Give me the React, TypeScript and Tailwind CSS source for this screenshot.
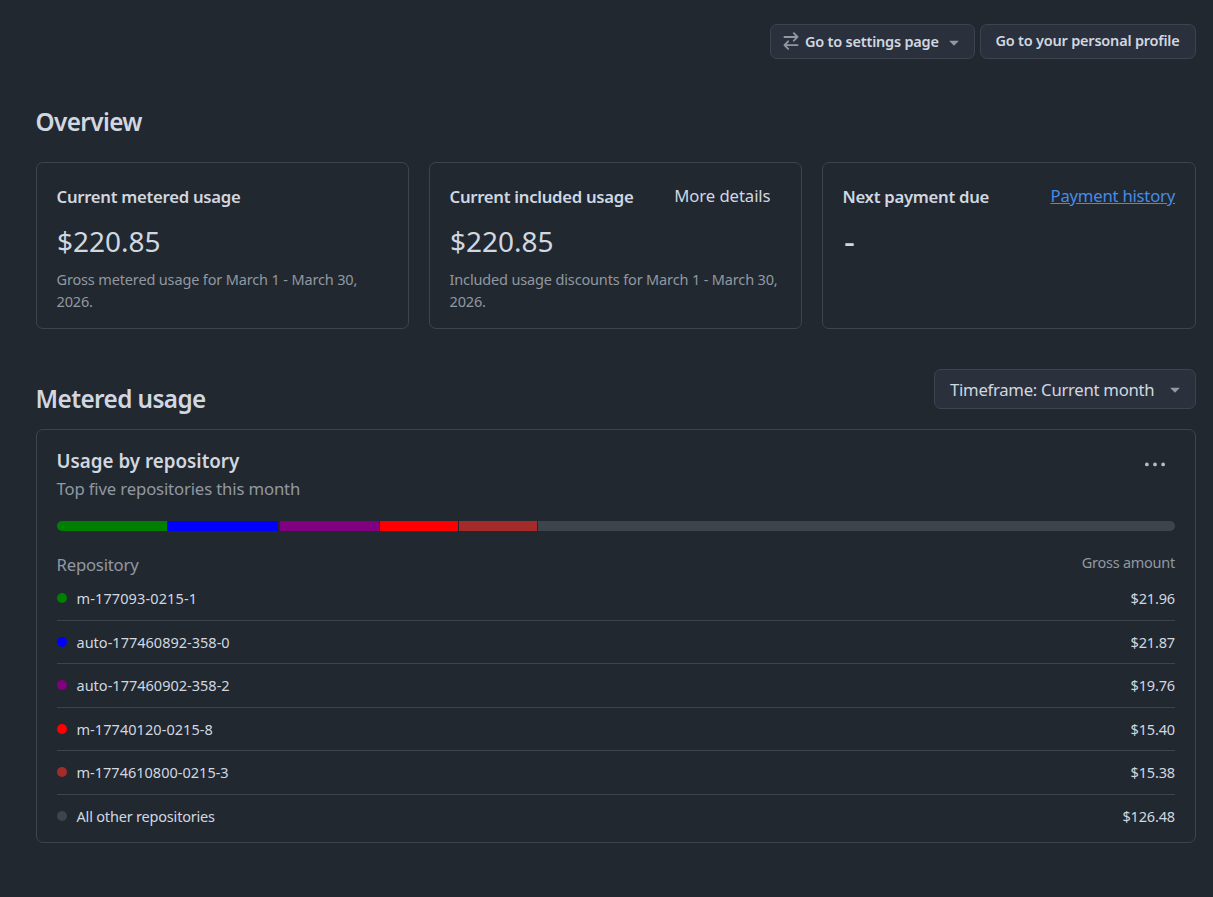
import React from 'react';

// ─────────────────────────────────────────────
// Data
// ─────────────────────────────────────────────
interface Repo {
  name: string;
  amount: string;
  dot: string;
  tracking: string;
}

const REPOS: Repo[] = [
  { name: 'm-177093-0215-1', amount: '$21.96', dot: 'bg-[#008000]', tracking: 'tracking-[0.12px]' },
  { name: 'auto-177460892-358-0', amount: '$21.87', dot: 'bg-[#0000ff]', tracking: 'tracking-[0.01px]' },
  { name: 'auto-177460902-358-2', amount: '$19.76', dot: 'bg-[#800080]', tracking: 'tracking-[0.01px]' },
  { name: 'm-17740120-0215-8', amount: '$15.40', dot: 'bg-[#ff0000]', tracking: 'tracking-[0.06px]' },
  { name: 'm-1774610800-0215-3', amount: '$15.38', dot: 'bg-[#a52a2a]', tracking: 'tracking-[0.01px]' },
  { name: 'All other repositories', amount: '$126.48', dot: 'bg-[#3d444d]', tracking: 'tracking-[-0.19px]' },
];

const SEGMENTS = [
  'w-[110px] mr-px bg-[#008000]',
  'w-[110px] mr-[2px] bg-[#0000ff]',
  'w-[99px] mr-px bg-[#800080]',
  'w-[78px] mr-px bg-[#ff0000]',
  'w-[78px] mr-px bg-[#a52a2a]',
  'flex-1 bg-[#3d444d]',
];

// ─────────────────────────────────────────────
// Icons
// ─────────────────────────────────────────────
const SwapIcon = () => (
  <svg viewBox="0 0 16 16" className="mb-[2px] h-5 w-5 shrink-0" fill="#9198a1">
    <path d="M5.22 14.78a.75.75 0 0 0 1.06-1.06L4.56 12h8.69a.75.75 0 0 0 0-1.5H4.56l1.72-1.72a.75.75 0 0 0-1.06-1.06l-3 3a.75.75 0 0 0 0 1.06l3 3Zm5.56-6.5a.75.75 0 1 1-1.06-1.06l1.72-1.72H2.75a.75.75 0 0 1 0-1.5h8.69L9.72 2.28a.75.75 0 0 1 1.06-1.06l3 3a.75.75 0 0 1 0 1.06l-3 3Z" />
  </svg>
);

const CaretIcon = () => (
  <svg viewBox="0 0 16 16" className="h-5 w-5 shrink-0" fill="#9198a1">
    <path d="m4.427 7.427 3.396 3.396a.25.25 0 0 0 .354 0l3.396-3.396A.25.25 0 0 0 11.396 7H4.604a.25.25 0 0 0-.177.427Z" />
  </svg>
);

const KebabIcon = () => (
  <svg viewBox="0 0 16 16" className="h-5 w-5" fill="#b7bdc8">
    <path d="M8 9a1.5 1.5 0 1 0 0-3 1.5 1.5 0 0 0 0 3ZM1.5 9a1.5 1.5 0 1 0 0-3 1.5 1.5 0 0 0 0 3Zm13 0a1.5 1.5 0 1 0 0-3 1.5 1.5 0 0 0 0 3Z" />
  </svg>
);

// ─────────────────────────────────────────────
// Summary card
// ─────────────────────────────────────────────
interface CardProps {
  title: string;
  value: React.ReactNode;
  note?: string;
  children?: React.ReactNode;
}

const SummaryCard = ({ title, value, note, children }: CardProps) => (
  <div className="h-[167px] rounded-[7px] border border-[#3d444d] px-5 pt-5">
    <div className="flex h-[26px] items-center justify-between whitespace-nowrap">
      <h3 className="-ml-[0.5px] pt-px text-[16.7px] font-semibold tracking-[-0.27px]">{title}</h3>
      {children}
    </div>
    <p className="mt-3 h-10 text-[28px] leading-[40px]">{value}</p>
    {note && (
      <p className="-ml-[0.5px] mt-[7px] text-[14.5px] leading-[22px] tracking-[-0.15px] text-[#9198a1]">
        {note}
      </p>
    )}
  </div>
);

export default function App() {
  return (
    <main
      className="h-[897px] w-[1213px] overflow-hidden bg-[#212830] pl-[36px] pr-[17px] pt-[24px] text-[#d1d7e0]"
      style={{ fontFamily: '"Noto Sans", "Open Sans", sans-serif' }}
    >
      {/* ── Top buttons ── */}
      <div className="flex h-[35px] justify-end gap-[5px] whitespace-nowrap text-[14.5px] font-semibold tracking-[-0.21px]">
        <button className="flex w-[205px] items-center rounded-[7px] border border-[#3d444d] bg-[#2a313c] pl-[10px]">
          <SwapIcon />
          <span className="ml-1 w-[139px] text-left">Go to settings page</span>
          <CaretIcon />
        </button>
        <button className="w-[216px] rounded-[7px] border border-[#3d444d] bg-[#2a313c] pb-[2px] pr-px text-center">
          Go to your personal profile
        </button>
      </div>

      {/* ── Overview ── */}
      <h2 className="-ml-[0.5px] mt-[43px] h-10 text-[24.3px] font-semibold leading-[40px] tracking-[-0.6px]">
        Overview
      </h2>
      <section className="mt-5 grid grid-cols-[373px_373px_374px] gap-5">
        <SummaryCard
          title="Current metered usage"
          value="$220.85"
          note="Gross metered usage for March 1 - March 30, 2026."
        />
        <SummaryCard
          title="Current included usage"
          value="$220.85"
          note="Included usage discounts for March 1 - March 30, 2026."
        >
          <button className="mr-[10.5px] text-[16.7px] tracking-[-0.08px]">More details</button>
        </SummaryCard>
        <SummaryCard title="Next payment due" value={<span className="ml-px text-[34px]">-</span>}>
          <a className="text-[16.7px] tracking-[-0.22px] text-[#478be6] underline">Payment history</a>
        </SummaryCard>
      </section>

      {/* ── Metered usage ── */}
      <div className="mt-10 flex h-[60px] items-start justify-between">
        <h2 className="-ml-[0.5px] mt-[10px] text-[24.3px] font-semibold leading-[40px] tracking-[-0.58px]">
          Metered usage
        </h2>
        <button className="flex h-10 w-[262px] items-center justify-between whitespace-nowrap rounded-[7px] border border-[#3d444d] bg-[#2a313c] pl-[15px] pr-[10px] text-[16.7px] tracking-[-0.27px]">
          <span className="pt-px">Timeframe: Current month</span>
          <CaretIcon />
        </button>
      </div>

      <section className="h-[414px] rounded-[7px] border border-[#3d444d] px-5 pt-[17px]">
        <div className="flex h-[54px] items-start justify-between">
          <div className="-ml-[0.5px]">
            <h3 className="h-[28px] text-[18.8px] font-semibold leading-[28px]">Usage by repository</h3>
            <p className="h-[26px] pt-px text-[16.7px] leading-[26px] tracking-[-0.14px] text-[#9198a1]">
              Top five repositories this month
            </p>
          </div>
          <button className="mr-[10px] mt-2">
            <KebabIcon />
          </button>
        </div>

        <div className="mt-5 flex h-[10px] overflow-hidden rounded-[5px]">
          {SEGMENTS.map((cls) => (
            <span key={cls} className={cls} />
          ))}
        </div>

        <div className="mt-[21px] flex h-[25px] justify-between text-[#9198a1]">
          <span className="-ml-[0.5px] text-[16.7px] leading-[26px] tracking-[-0.2px]">Repository</span>
          <span className="text-[14.5px] leading-[20px] tracking-[-0.25px]">Gross amount</span>
        </div>

        <ul className="text-[14.5px]">
          {REPOS.map((repo) => (
            <li
              key={repo.name}
              className="flex h-[43.5px] items-center border-b border-[#3d444d] last:border-b-0"
            >
              <span className={`mr-[9.5px] h-[10px] w-[10px] rounded-full ${repo.dot}`} />
              <span className={`flex-1 pt-[2px] ${repo.tracking}`}>{repo.name}</span>
              <span className="pt-[2px] tracking-[-0.15px]">{repo.amount}</span>
            </li>
          ))}
        </ul>
      </section>
    </main>
  );
}
